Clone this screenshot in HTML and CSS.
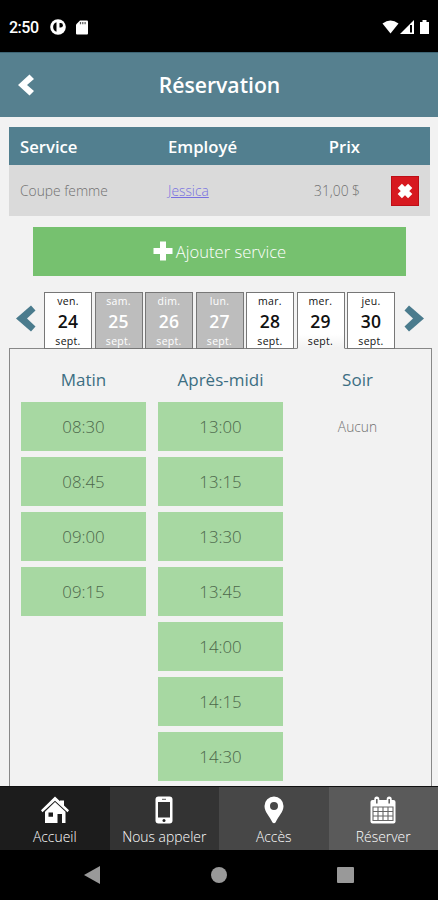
FILE: index.html
```html
<!DOCTYPE html>
<html lang="fr">
<head>
  <meta charset="UTF-8">
  <meta name="viewport" content="width=device-width, initial-scale=1.0">
  <title>Réservation</title>
  <link rel="stylesheet" href="styles.css">
</head>
<body>
  <div class="status-bar">
    <span class="clock">2:50</span>
    <svg class="status-app" width="16" height="16" viewBox="0 0 16 16">
      <circle cx="8" cy="8" r="7.8" fill="#fff"/>
      <path d="M6.500 3.200C2 4.500 2 11.500 6.500 12.800z" fill="#000"/>
      <path d="M9.500 4h1.200a2.200 2.200 0 0 1 0 4.400H9.500z" fill="#000"/>
    </svg>
    <svg class="status-card" width="12" height="15" viewBox="0 0 12 15">
      <path d="M4 .5h7q1 0 1 1v12q0 1-1 1H1q-1 0-1-1v-9z" fill="#fff"/>
      <path d="M4.500 2v2.300M6.800 2v2.300M9.100 2v2.300" stroke="#555" stroke-width="1.200"/>
    </svg>
    <div class="status-right">
      <svg width="49" height="15" viewBox="0 0 49 15">
        <path d="M.5 3.500Q8.500-2.500 16.500 3.500L8.500 13.500z" fill="#fff"/>
        <path d="M18 14L32 0v14z" fill="#fff"/>
        <path d="M29 5v7.500" stroke="#000" stroke-width="2"/>
        <path d="M38 2h2.500V0h4v2H47v12h-9z" fill="#fff"/>
      </svg>
    </div>
  </div>

  <header>
    <svg class="back" width="17" height="22" viewBox="0 0 17 22">
      <path d="M0 11L11.500.5 16 5 9 11l7 6-4.500 4.500z" fill="#fff"/>
    </svg>
    <h1>Réservation</h1>
  </header>

  <main>
    <table class="services">
      <thead>
        <tr><th class="col-service">Service</th><th class="col-employe">Employé</th><th class="col-prix">Prix</th><th></th></tr>
      </thead>
      <tbody>
        <tr>
          <td>Coupe femme</td>
          <td><a href="#">Jessica</a></td>
          <td class="col-prix">31,00 $</td>
          <td class="col-action">
            <button class="supprimer" aria-label="Supprimer">
              <svg width="16" height="16" viewBox="0 0 16 16"><path d="M2.800 2.800l10.400 10.400M13.200 2.800L2.800 13.200" stroke="#fff" stroke-width="6"/></svg>
            </button>
          </td>
        </tr>
      </tbody>
    </table>

    <button class="ajouter">
      <svg width="20" height="20" viewBox="0 0 20 20"><path d="M10 .5v19M.5 10h19" stroke="#fff" stroke-width="6"/></svg>
      <span>Ajouter service</span>
    </button>

    <div class="jours">
      <svg class="fleche" width="20" height="27" viewBox="0 0 20 27"><path d="M0 13.500L15 .5l4.500 5L11 13.500l8.500 8-4.500 5z" fill="#4a7b8d"/></svg>
      <div class="onglets">
        <div class="jour"><span>ven.</span><b>24</b><span>sept.</span></div>
        <div class="jour ferme"><span>sam.</span><b>25</b><span>sept.</span></div>
        <div class="jour ferme"><span>dim.</span><b>26</b><span>sept.</span></div>
        <div class="jour ferme"><span>lun.</span><b>27</b><span>sept.</span></div>
        <div class="jour"><span>mar.</span><b>28</b><span>sept.</span></div>
        <div class="jour actif"><span>mer.</span><b>29</b><span>sept.</span></div>
        <div class="jour"><span>jeu.</span><b>30</b><span>sept.</span></div>
      </div>
      <svg class="fleche" width="20" height="27" viewBox="0 0 20 27"><path d="M20 13.500L5 .5.500 5.500 9 13.500l-8.500 8 4.500 5z" fill="#4a7b8d"/></svg>
    </div>

    <div class="horaires">
      <div class="periode">
        <h2>Matin</h2>
        <div class="heure">08:30</div>
        <div class="heure">08:45</div>
        <div class="heure">09:00</div>
        <div class="heure">09:15</div>
      </div>
      <div class="periode">
        <h2>Après-midi</h2>
        <div class="heure">13:00</div>
        <div class="heure">13:15</div>
        <div class="heure">13:30</div>
        <div class="heure">13:45</div>
        <div class="heure">14:00</div>
        <div class="heure">14:15</div>
        <div class="heure">14:30</div>
      </div>
      <div class="periode">
        <h2>Soir</h2>
        <div class="aucun">Aucun</div>
      </div>
    </div>
  </main>

  <nav>
    <a class="menu-accueil">
      <svg width="28" height="28" viewBox="0 0 28 28">
        <path d="M14 .5l5 4.800V4.500h4v5l5 4.800-1.500 2L14 4.800 1.500 16.300 0 14.300z" fill="#fff"/>
        <path d="M14 6l10.500 9.800V27H21v-9h-4.500v9H4V15.800zM7.500 16.500v4.300H12v-4.300z" fill="#fff" fill-rule="evenodd"/>
      </svg>
      <span>Accueil</span>
    </a>
    <a class="menu-appeler">
      <svg width="28" height="28" viewBox="0 0 28 28">
        <rect x="5.500" y=".5" width="17" height="27" rx="3" fill="#fff"/>
        <rect x="8" y="6" width="12" height="15.500" fill="#333"/>
        <path d="M12 3.300h4" stroke="#555"/>
        <circle cx="14" cy="24.500" r="1.500" fill="#222"/>
      </svg>
      <span>Nous appeler</span>
    </a>
    <a class="menu-acces">
      <svg width="28" height="28" viewBox="0 0 28 28">
        <path d="M14 .5A9.500 9.500 0 0 0 4.500 10C4.500 16 9.500 20 12.500 26.500q1.500 1.500 3 0C18.500 20 23.500 16 23.500 10A9.500 9.500 0 0 0 14 .5zM14 6a4 4 0 1 1 0 8 4 4 0 0 1 0-8z" fill="#fff" fill-rule="evenodd"/>
      </svg>
      <span>Accès</span>
    </a>
    <a class="menu-reserver">
      <svg width="28" height="28" viewBox="0 0 28 28">
        <path d="M3.500 4h21q2 0 2 2v19.500q0 2-2 2h-21q-2 0-2-2V6q0-2 2-2z" fill="#fff"/>
        <path d="M7.800 3v5M20.200 3v5" stroke="#fff" stroke-width="5" stroke-linecap="round"/>
        <path d="M7.800 3v4.500M20.200 3v4.500" stroke="#666" stroke-width="1.600"/>
        <path d="M4 11h20v13.500H4zM4 15.500h20M4 20h20M9 11v13.500M14 11v13.500M19 11v13.500" fill="none" stroke="#666" stroke-width="1.100"/>
      </svg>
      <span>Réserver</span>
    </a>
  </nav>

  <div class="system-bar">
    <svg width="18" height="20" viewBox="0 0 18 20"><path d="M17 1v18L1 10z" fill="#999"/></svg>
    <svg width="18" height="20" viewBox="0 0 18 20"><circle cx="9" cy="10" r="8" fill="#999"/></svg>
    <svg width="18" height="20" viewBox="0 0 18 20"><rect x="0" y="2" width="17" height="16" rx="1" fill="#999"/></svg>
  </div>
</body>
</html>
```
FILE: styles.css
```css
* {
  box-sizing: border-box;
}
body {
  font-family: "Open Sans", sans-serif;
  font-weight: 300;
  margin: 0;
  height: 900px;
  display: flex;
  flex-direction: column;
  overflow: hidden;
  background: #f2f2f2;
}
svg {
  display: block;
  flex: none;
}
button {
  border: 0;
  font-family: inherit;
  font-weight: inherit;
}
.status-bar {
  flex: none;
  height: 52px;
  padding: 2px 8px 0 9px;
  display: flex;
  align-items: center;
  background: #000;
  color: #fff;
}
.clock {
  width: 41px;
  font: 500 16px Roboto, sans-serif;
  letter-spacing: -0.5px;
}
.status-card {
  margin-left: 10px;
}
.status-right {
  margin-left: auto;
  margin-right: -1px;
}
header {
  flex: none;
  height: 65px;
  display: grid;
  grid-template-columns: 60px 1fr 60px;
  align-items: center;
  background: #56808f;
  color: #fff;
  border-top: 1px solid #3d6575;
}
.back {
  margin: -1px 0 0 18px;
}
h1 {
  margin: -1px 0 0;
  padding-left: 1px;
  font-size: 21.2px;
  font-weight: 600;
  text-align: center;
}
main {
  flex: 1;
  min-height: 0;
  overflow: hidden;
  padding: 10px 6px 0 9px;
}
.services {
  width: 421px;
  border-collapse: collapse;
  table-layout: fixed;
}
.services th {
  height: 38px;
  padding: 0 0 0 11px;
  background: #527f8f;
  color: #fff;
  font-size: 16.7px;
  font-weight: 650;
  text-align: left;
}
.services td {
  height: 51px;
  padding: 0 0 0 11px;
  background: #dadada;
  color: #707070;
  font-size: 13.8px;
}
.services td a {
  color: #7770e0;
}
.services .col-service {
  width: 148px;
}
.services .col-employe {
  width: 102px;
}
.services .col-prix {
  width: 101px;
  padding-left: 0;
  text-align: right;
}
.services .col-action {
  padding: 0 11px 0 0;
}
.supprimer {
  width: 28px;
  height: 30px;
  margin-left: auto;
  padding: 0;
  display: flex;
  align-items: center;
  justify-content: center;
  background: #d71920;
  border: 1px solid #bd0e17;
}
.ajouter {
  width: 373px;
  height: 49px;
  margin: 11px 0 0 24px;
  padding: 0 6px 1px;
  display: flex;
  align-items: center;
  justify-content: center;
  gap: 3px;
  background: #76c16f;
  color: #fff;
  font-size: 16.6px;
}
.jours {
  height: 57px;
  margin-top: 16px;
  padding: 0 8px 0 7px;
  display: flex;
  justify-content: space-between;
}
.fleche {
  margin-top: 13px;
}
.onglets {
  position: relative;
  width: 351px;
  margin-left: -1px;
  display: flex;
  justify-content: space-between;
}
.jour {
  width: 48px;
  height: 57px;
  display: flex;
  flex-direction: column;
  align-items: center;
  background: #fff;
  border: 1px solid #777;
  color: #111;
  font-size: 10.5px;
  font-weight: 400;
  letter-spacing: 0.3px;
  line-height: 17px;
}
.jour b {
  margin-bottom: 1px;
  font-size: 17.5px;
  font-weight: 550;
  line-height: 22px;
}
.jour.ferme {
  background: #bdbdbd;
  color: #fff;
  font-weight: 500;
}
.jour.ferme b {
  font-weight: 600;
}
.jour.actif {
  border-bottom-color: #f2f2f2;
  background: linear-gradient(#fff 75%, #f2f2f2);
}
.horaires {
  height: 450px;
  margin: -1px 0 0;
  padding: 18px 11px 0;
  display: grid;
  grid-template-columns: repeat(3, 125px);
  justify-content: space-between;
  border: 1px solid #888;
}
h2 {
  margin: 0 0 10px;
  height: 25px;
  line-height: 25px;
  font-size: 17px;
  font-weight: 530;
  text-align: center;
  color: #3c6e82;
}
.heure, .aucun {
  height: 49px;
  margin-bottom: 6px;
  line-height: 50px;
  text-align: center;
}
.heure {
  background: #a7d8a2;
  color: #4c674a;
  font-size: 16.8px;
}
.aucun {
  color: #707070;
  font-size: 13.8px;
}
nav {
  flex: none;
  height: 64px;
  display: grid;
  grid-template-columns: repeat(4, 1fr);
  border-top: 1px solid #111;
}
nav a {
  padding-top: 9px;
  display: flex;
  flex-direction: column;
  align-items: center;
  color: #fff;
  font-size: 13.9px;
  line-height: 26px;
}
.menu-accueil {
  background: #1c1c1c;
}
.menu-appeler {
  background: #333;
}
.menu-acces {
  background: #474747;
}
.menu-reserver {
  background: #5a5a5a;
}
.system-bar {
  flex: none;
  height: 50px;
  display: flex;
  justify-content: center;
  align-items: center;
  gap: 109px;
  background: #000;
}
```
